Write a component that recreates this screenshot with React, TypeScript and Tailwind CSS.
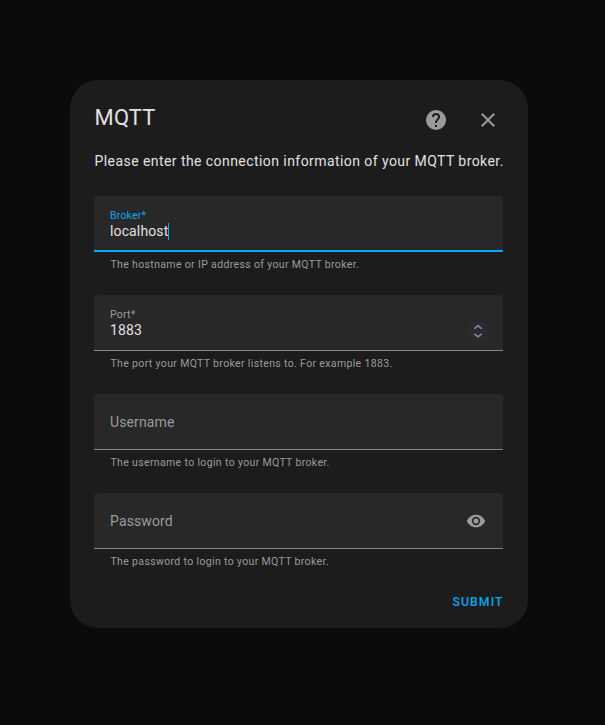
import React from "react";

type FieldProps = {
  label: string;
  value?: string;
  helper: string;
  active?: boolean;
  children?: React.ReactNode;
};

function Field({ label, value, helper, active = false, children }: FieldProps) {
  return (
    <div className="h-[99px]">
      <div
        className={
          "flex h-14 items-start justify-between rounded-t bg-[#282828] px-4 " +
          (active ? "border-b-2 border-[#03a9f4]" : "border-b border-[#868686]")
        }
      >
        {value ? (
          <div className="flex flex-col pt-3">
            <span className={"text-[10.5px] leading-4 " + (active ? "tracking-[0.2px] text-[#03a9f4]" : "tracking-[0.25px] text-[#9b9b9b]")}>
              {label}
            </span>
            <span className="-mt-px flex h-4 items-center text-[14px] leading-4 tracking-[0.13px] text-[#e1e1e1]">
              {value}
              {active && <span className="mt-px h-[17px] w-px bg-[#03a9f4]" />}
            </span>
          </div>
        ) : (
          <span className="pt-[18px] text-[14px] leading-5 tracking-[0.13px] text-[#9b9b9b]">{label}</span>
        )}
        {children}
      </div>
      <p className="pl-[16.5px] pt-1 text-[10.5px] leading-[18px] tracking-[0.35px] text-[#9b9b9b]">{helper}</p>
    </div>
  );
}

export default function App() {
  return (
    <main className="flex h-[725px] w-[605px] bg-[#0b0b0b] pl-[70px] pt-20 font-['Roboto',sans-serif]">
      <section className="flex h-[548px] w-[458px] flex-col rounded-[28px] bg-[#1c1c1c] pl-6 pr-[25px]">
        <header className="flex h-[72px] items-start justify-between pt-[22px]">
          <h1 className="pl-[0.5px] text-[22px] leading-8 tracking-[0.2px] text-[#e1e1e1]">MQTT</h1>
          <div className="flex gap-7 pr-[3px] pt-[6px] text-[#9b9b9b]">
            <svg className="size-6" viewBox="0 0 24 24" fill="currentColor">
              <path d="M15.07,11.25L14.17,12.17C13.45,12.89 13,13.5 13,15H11V14.5C11,13.39 11.45,12.39 12.17,11.67L13.41,10.41C13.78,10.05 14,9.55 14,9C14,7.89 13.1,7 12,7A2,2 0 0,0 10,9H8A4,4 0 0,1 12,5A4,4 0 0,1 16,9C16,9.88 15.64,10.67 15.07,11.25M13,19H11V17H13M12,2A10,10 0 0,0 2,12A10,10 0 0,0 12,22A10,10 0 0,0 22,12C22,6.47 17.5,2 12,2Z" />
            </svg>
            <svg className="size-6" viewBox="0 0 24 24" fill="currentColor">
              <path d="M19,6.41L17.59,5L12,10.59L6.41,5L5,6.41L10.59,12L5,17.59L6.41,19L12,13.41L17.59,19L19,17.59L13.41,12L19,6.41Z" />
            </svg>
          </div>
        </header>
        <p className="h-11 whitespace-nowrap pl-[0.5px] text-[14px] leading-[18px] tracking-[0.435px] text-[#e1e1e1]">
          Please enter the connection information of your MQTT broker.
        </p>
        <Field label="Broker*" value="localhost" helper="The hostname or IP address of your MQTT broker." active />
        <Field label="Port*" value="1883" helper="The port your MQTT broker listens to. For example 1883.">
          <svg className="mt-[27px] h-[18px] w-[18px] bg-[#2b2933]" viewBox="0 0 18 18" fill="none" stroke="#929097" strokeWidth="1.5">
            <path d="M5.3 6.8 9 3.7l3.7 3.1M5.3 11.7 9 14.8l3.7-3.1" />
          </svg>
        </Field>
        <Field label="Username" helper="The username to login to your MQTT broker." />
        <Field label="Password" helper="The password to login to your MQTT broker.">
          <svg className="mr-px mt-[18px] size-5" viewBox="0 0 24 24" fill="#9b9b9b">
            <path d="M12,9A3,3 0 0,0 9,12A3,3 0 0,0 12,15A3,3 0 0,0 15,12A3,3 0 0,0 12,9M12,17A5,5 0 0,1 7,12A5,5 0 0,1 12,7A5,5 0 0,1 17,12A5,5 0 0,1 12,17M12,4.5C7,4.5 2.73,7.61 1,12C2.73,16.39 7,19.5 12,19.5C17,19.5 21.27,16.39 23,12C21.27,7.61 17,4.5 12,4.5Z" />
          </svg>
        </Field>
        <button className="-mr-[0.5px] mt-px self-end text-[12.25px] font-medium leading-[18px] tracking-[1.05px] text-[#03a9f4]">SUBMIT</button>
      </section>
    </main>
  );
}
